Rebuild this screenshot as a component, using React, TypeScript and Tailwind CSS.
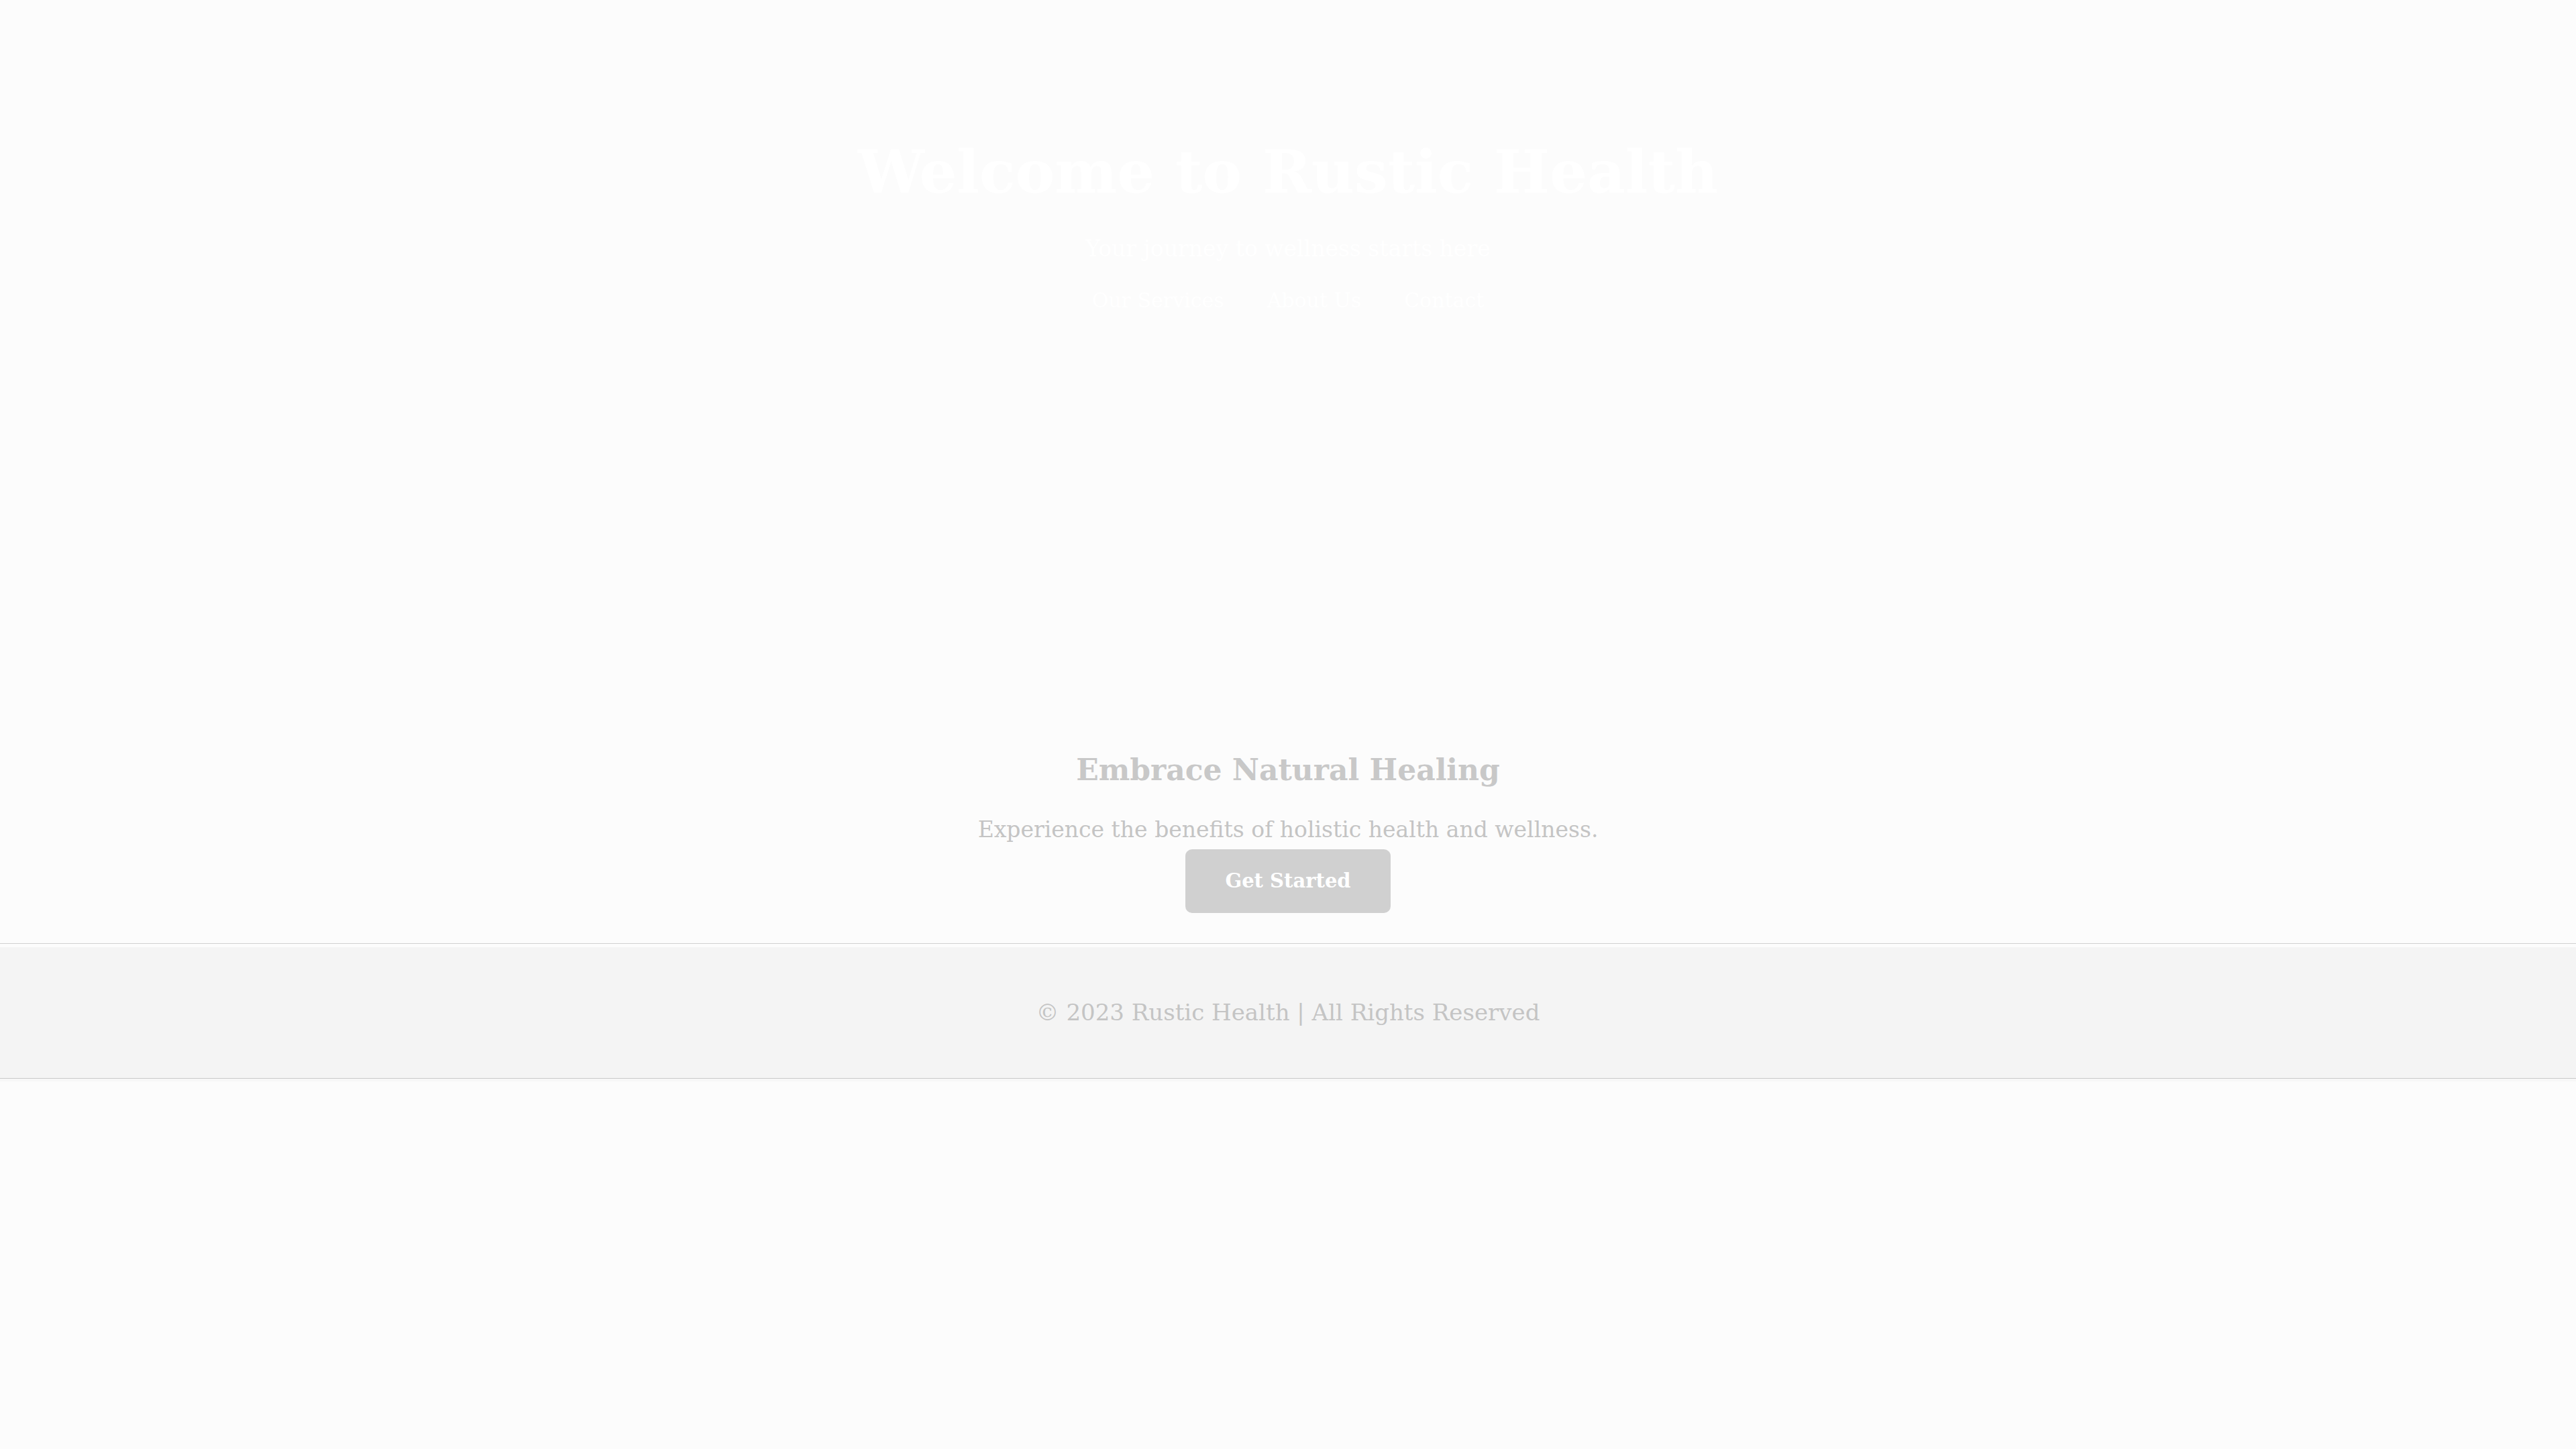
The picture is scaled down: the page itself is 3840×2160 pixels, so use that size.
export default function App() {
  return (
    <div className="min-h-screen bg-[#fcfcfc] font-['DejaVu_Serif',serif]">
      <header className="h-[1060px] pt-[212px] text-center text-white">
        <h1 className="text-[88px] leading-none font-bold">Welcome to Rustic Health</h1>
        <p className="mt-[54px] text-[33px] leading-none">Your journey to wellness starts here</p>
        <nav className="mt-[46px] flex justify-center gap-[64px] text-[30px] leading-none">
          <a href="#services">Our Services</a>
          <a href="#about">About Us</a>
          <a href="#contact">Contact</a>
        </nav>
      </header>

      <section className="pt-[66px] pb-[45px] text-center border-b border-[#d0d0d0]">
        <h2 className="text-[44px] leading-none font-bold text-[#c8c8c8]">Embrace Natural Healing</h2>
        <p className="mt-[50px] text-[33px] leading-none text-[#c4c4c4]">
          Experience the benefits of holistic health and wellness.
        </p>
        <button className="mt-[13px] w-[306px] h-[95px] rounded-[10px] bg-[#d0d0d0] text-white text-[29px] font-bold">
          Get Started
        </button>
      </section>

      <footer className="mt-[5px] h-[196px] flex items-center justify-center bg-[#f4f4f4] border-b border-[#c8c8c8] shadow-[0_4px_0_#f7f7f7]">
        <p className="text-[34px] text-[#c4c4c4]">© 2023 Rustic Health | All Rights Reserved</p>
      </footer>
    </div>
  );
}
